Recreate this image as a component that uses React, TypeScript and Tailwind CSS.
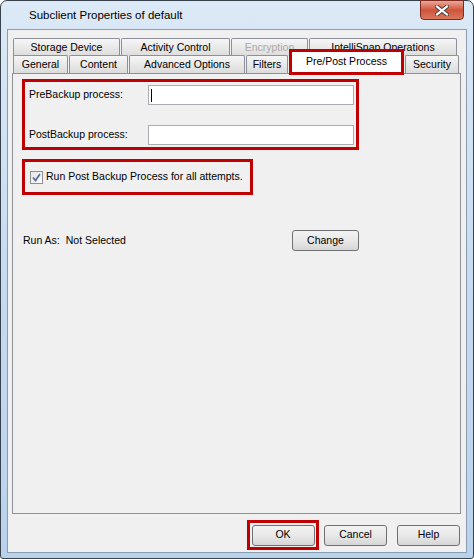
import React from 'react';

const rowOne = [
  { label: 'Storage Device', w: 'w-[107px]' },
  { label: 'Activity Control', w: 'w-[109px]' },
  { label: 'Encryption', w: 'w-[77px]', disabled: true },
  { label: 'IntelliSnap Operations', w: 'w-[148px]' },
];

const rowTwo = [
  { label: 'General', w: 'w-[55px]' },
  { label: 'Content', w: 'w-[59px]' },
  { label: 'Advanced Options', w: 'w-[116px]' },
  { label: 'Filters', w: 'w-[42px]' },
];

const font = { fontFamily: '"Liberation Sans", Arial, sans-serif' };

const Tab = ({ label, w, disabled }: { label: string; w: string; disabled?: boolean }) => (
  <div
    className={`${w} h-[18px] flex items-center justify-center border border-b-0 border-[#8e9099] rounded-t-[2px] bg-gradient-to-b from-[#f6f6f6] to-[#dcdcdc] text-[10.5px] ${
      disabled ? 'text-[#a9a9a9]' : 'text-black'
    }`}
  >
    {label}
  </div>
);

const Button = ({ label, w }: { label: string; w: string }) => (
  <div
    className={`${w} h-[21px] flex items-center justify-center rounded-[3px] border border-[#707070] bg-gradient-to-b from-[#f3f3f3] via-[#e8e8e8] to-[#d6d6d6] text-[10.5px] text-black`}
  >
    {label}
  </div>
);

export default function App() {
  return (
    <div className="w-[474px] h-[559px] bg-white" style={font}>
      <div className="w-[474px] h-[559px] flex flex-col border border-[#38424d] rounded-t-[7px] rounded-b-[3px] bg-gradient-to-b from-[#dce9f7] via-[#c6dbf1] to-[#b9d2ec]">
        {/* title bar */}
        <div className="h-[28px] flex items-start relative">
          <span className="ml-[28px] mt-[6px] text-[11.5px] text-black">Subclient Properties of default</span>
          <div className="absolute left-[419px] top-[-1px] w-[44px] h-[20px] rounded-b-[4px] border border-[#7a2a1e] bg-gradient-to-b from-[#e9a896] via-[#d0533a] to-[#d9775c] flex items-center justify-center">
            <svg width="14" height="11" viewBox="0 0 14 11">
              <path d="M2 1.5 L12 9.5 M12 1.5 L2 9.5" stroke="#3f3f3f" strokeWidth="4" strokeLinecap="square" />
              <path d="M2 1.5 L12 9.5 M12 1.5 L2 9.5" stroke="#ffffff" strokeWidth="2.2" strokeLinecap="square" />
            </svg>
          </div>
        </div>

        {/* client area */}
        <div className="flex-1 mx-[6px] mb-[5px] border border-[#8b9bb0] bg-[#f0f0f0] flex flex-col">
          <div className="pt-[8px] pl-[5px] flex flex-col">
            <div className="flex gap-[1px]">
              {rowOne.map((t) => (
                <Tab key={t.label} {...t} />
              ))}
            </div>
            <div className="flex gap-[1px] -mt-[1px] items-end relative">
              {rowTwo.map((t) => (
                <Tab key={t.label} {...t} />
              ))}
              <div className="w-[115px] h-[26px] -mt-[8px] mb-[-2px] border-[3px] border-[#c00000] bg-white flex items-center justify-center text-[10.5px] text-black relative z-10">
                Pre/Post Process
              </div>
              <Tab label="Security" w="w-[54px]" />
            </div>
          </div>

          {/* tab panel */}
          <div className="ml-[4px] mr-[5px] h-[441px] border border-[#8e9099] bg-[#f0f0f0] flex flex-col text-[10.5px] text-black">
            <div className="ml-[9px] mt-[5px] w-[337px] h-[71px] border-[3px] border-[#c00000] flex flex-col">
              <div className="flex items-center mt-[3px] h-[20px]">
                <span className="w-[123px] pl-[4px]">PreBackup process:</span>
                <div className="w-[206px] h-[20px] border border-[#abadb3] bg-white flex items-center">
                  <div className="ml-[2px] w-[1px] h-[13px] bg-black" />
                </div>
              </div>
              <div className="flex items-center mt-[20px] h-[20px]">
                <span className="w-[123px] pl-[4px]">PostBackup process:</span>
                <div className="w-[206px] h-[20px] border border-[#abadb3] bg-white" />
              </div>
            </div>

            <div className="ml-[9px] mt-[9px] w-[231px] h-[36px] border-[3px] border-[#c00000] flex items-center">
              <div className="ml-[5px] w-[13px] h-[13px] border border-[#8f8f8f] bg-gradient-to-br from-[#e6e6e6] to-[#fbfbfb] flex items-center justify-center">
                <svg width="9" height="9" viewBox="0 0 9 9">
                  <path d="M1 4.5 L3.5 7.5 L8 1" stroke="#5a6d9c" strokeWidth="1.8" fill="none" />
                </svg>
              </div>
              <span className="ml-[3px]">Run Post Backup Process for all attempts.</span>
            </div>

            <div className="mt-[35px] flex items-center">
              <span className="ml-[10px]">Run As:</span>
              <span className="ml-[6px]">Not Selected</span>
              <div className="ml-auto mr-[101px]">
                <Button label="Change" w="w-[67px]" />
              </div>
            </div>
          </div>

          {/* footer buttons */}
          <div className="flex items-center justify-end mt-[6px] mr-[6px]">
            <div className="w-[72px] h-[30px] border-[3px] border-[#c00000] flex items-center justify-center">
              <Button label="OK" w="w-[63px]" />
            </div>
            <div className="ml-[5px]">
              <Button label="Cancel" w="w-[63px]" />
            </div>
            <div className="ml-[10px]">
              <Button label="Help" w="w-[63px]" />
            </div>
          </div>
        </div>
      </div>
    </div>
  );
}
